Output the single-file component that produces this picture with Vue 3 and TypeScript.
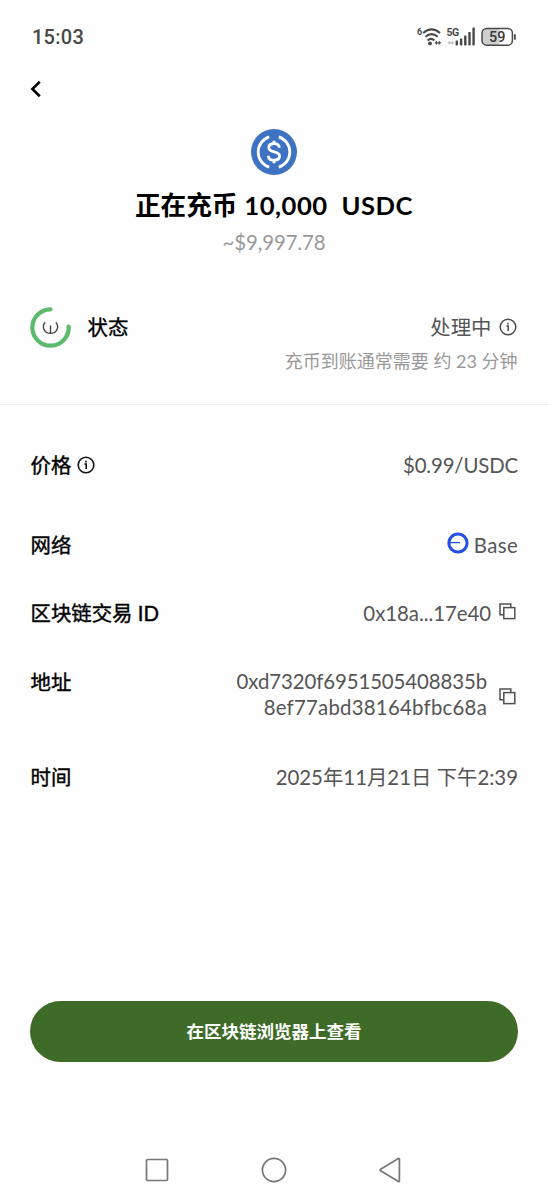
<script setup lang="ts">
const copyBack = 'M4.6 11.8H1V1H11.8V4.4'
const token = { name: 'USDC', amount: '10,000', value: '~$9,997.78', price: '$0.99/USDC' }
const addressLines: string[] = ['0xd7320f6951505408835b', '8ef77abd38164bfbc68a']
const bars = [
  { x: 11, h: 5 },
  { x: 15.3, h: 7 },
  { x: 19.5, h: 10 },
  { x: 23.7, h: 13.5 },
  { x: 27.8, h: 18 },
]
</script>

<template>
  <main class="page">
    <header class="statusbar">
      <span class="clock">15:03</span>
      <div class="indicators">
        <svg class="wifi" width="26" height="22" viewBox="0 0 26 22">
          <text x="0" y="8.6" class="tiny">6</text>
          <g fill="none" stroke="#484848" stroke-width="2.1">
            <path d="M6.2 7Q14.6 -0.4 23 7" />
            <path d="M8.5 10.8Q14.6 5.4 20.7 10.8" />
            <path d="M10.6 14.4Q14 11.2 17.4 14.4" />
          </g>
          <circle cx="13" cy="17.4" r="1.9" fill="#484848" />
          <path d="M17.6 16.8l2.4-2.1v1.5h1.8v-1.5l2.4 2.1-2.4 2.1v-1.5H20v1.5z" fill="#484848" />
        </svg>
        <svg class="cell" width="31" height="22" viewBox="0 0 31 22">
          <text x="0.4" y="10" class="tiny g5">5G</text>
          <path d="M1.4 16.8l2.6-2.2v1.5h1.8v-1.5l2.6 2.2-2.6 2.2v-1.5H4v1.5z" fill="#c4c4c4" />
          <rect v-for="b in bars" :key="b.x" :x="b.x - 1.4" :y="19.4 - b.h" width="2.4" :height="b.h" rx=".7" fill="#484848" />
        </svg>
        <svg class="battery" width="36" height="20" viewBox="0 0 36 20">
          <rect x="1" y="1.4" width="30.4" height="16.8" rx="4.8" fill="#fff" />
          <path d="M18.5 1.4H5.8A4.8 4.8 0 0 0 1 6.2v7.2a4.8 4.8 0 0 0 4.8 4.8h12.7z" fill="#cfcfcf" />
          <rect x="1" y="1.4" width="30.4" height="16.8" rx="4.8" fill="none" stroke="#484848" stroke-width="1.5" />
          <rect x="33" y="7" width="1.8" height="5.8" rx=".9" fill="#484848" />
          <text x="16.2" y="14.8" text-anchor="middle" class="level">59</text>
        </svg>
      </div>
    </header>

    <nav class="back">
      <svg width="12" height="18" viewBox="0 0 12 18">
        <path d="M9.8 1.8L2.4 9l7.4 7.2" fill="none" stroke="#000" stroke-width="2.6" />
      </svg>
    </nav>

    <section class="hero">
      <svg width="46" height="46" viewBox="0 0 46 46">
        <circle cx="23" cy="23" r="23" fill="#3e73c4" />
        <g fill="none" stroke="#fff" stroke-width="2.8">
          <path d="M18.2 7.8A16 16 0 0 0 18.2 38.2" />
          <path d="M27.8 7.8A16 16 0 0 1 27.8 38.2" />
          <path d="M28.3 18.8C28.3 16 26 14.7 23 14.7c-3.2 0-5.2 1.6-5.2 4 0 5.8 10.8 2.4 10.8 8.3 0 2.7-2.3 4.2-5.6 4.2-3.4 0-5.7-1.5-5.7-4.5M23 11.8v3M23 31v3.3" />
        </g>
      </svg>
      <h1 class="title"><span>正在充币</span><span class="amount">{{ token.amount }}</span><span class="symbol">{{ token.name }}</span></h1>
      <p class="fiat">{{ token.value }}</p>
    </section>

    <section class="progress">
      <svg width="41" height="41" viewBox="0 0 41 41">
        <path d="M20.5 2.3A18.2 18.2 0 1 0 38.7 19.6" fill="none" stroke="#5dba6d" stroke-width="4.2" stroke-linecap="round" />
        <path d="M15.2 15.2C11.4 19.6 14 26.4 20.5 26.4S29.6 19.6 25.8 15.2M20.5 18.4v8" fill="none" stroke="#484848" stroke-width="1.4" />
      </svg>
      <span class="label state">状态</span>
      <div class="progress-info">
        <div class="value with-icon">
          <span>处理中</span>
          <svg width="18" height="18" viewBox="0 0 18 18" fill="none" stroke="#4c4c4c" stroke-width="1.5">
            <circle cx="9" cy="9" r="7.8" />
            <path d="M7.4 8h1.8v5M9 4.7v1.7" />
          </svg>
        </div>
        <div class="eta">充币到账通常需要 约 <span class="minutes">23</span> 分钟</div>
      </div>
    </section>

    <section class="details">
      <div class="row price">
        <span class="label with-icon">
          <span>价格</span>
          <svg width="18" height="18" viewBox="0 0 18 18" fill="none" stroke="#111" stroke-width="1.6">
            <circle cx="9" cy="9" r="7.8" />
            <path d="M7.4 8h1.8v5M9 4.7v1.7" />
          </svg>
        </span>
        <span class="value rate">{{ token.price }}</span>
      </div>
      <div class="row network">
        <span class="label">网络</span>
        <span class="value chain">
          <svg class="chain-logo" width="22" height="22" viewBox="0 0 22 22" fill="none" stroke="#2450e6">
            <circle cx="11" cy="11" r="9.1" stroke-width="3" />
            <path d="M3 10.6h10" stroke-width="1.3" />
          </svg>
          <span class="chain-name">Base</span>
        </span>
      </div>
      <div class="row hash">
        <span class="label">区块链交易 <span class="id">ID</span></span>
        <span class="value copyable">
          <span class="hash-text">0x18a...17e40</span>
          <svg width="17" height="17" viewBox="0 0 17 17" fill="none" stroke="#505050" stroke-width="1.5">
            <path :d="copyBack" />
            <rect x="4.8" y="4.6" width="11" height="11" />
          </svg>
        </span>
      </div>
      <div class="row address">
        <span class="label">地址</span>
        <span class="value copyable">
          <span class="address-text">
            <span v-for="(line, i) in addressLines" :key="line" :class="'line' + i">{{ line }}</span>
          </span>
          <svg width="17" height="17" viewBox="0 0 17 17" fill="none" stroke="#505050" stroke-width="1.5">
            <path :d="copyBack" />
            <rect x="4.8" y="4.6" width="11" height="11" />
          </svg>
        </span>
      </div>
      <div class="row time">
        <span class="label">时间</span>
        <span class="value date">2025年11月21日 下午2:39</span>
      </div>
    </section>

    <button class="explorer" type="button">在区块链浏览器上查看</button>

    <footer class="system-nav">
      <svg width="24" height="26" viewBox="0 0 24 26"><rect x="1.5" y="2.5" width="21" height="21" rx="1.2" /></svg>
      <svg width="26" height="26" viewBox="0 0 26 26"><circle cx="13" cy="13" r="11.6" /></svg>
      <svg width="24" height="26" viewBox="0 0 24 26"><path d="M21.4 2.2v21.6q0 1.2-1 .6L2.6 13.8q-1.2-.8 0-1.6L20.4 1.6q1-.6 1 .6z" /></svg>
    </footer>
  </main>
</template>

<style>
body {
  background: #fefefe;
}
</style>

<style scoped>
.page {
  display: flex;
  flex-direction: column;
  box-sizing: border-box;
  width: 548px;
  height: 1200px;
  overflow: hidden;
  background: #fefefe;
  color: #000;
  font-family: Lato, "Noto Sans CJK SC", sans-serif;
  font-size: 20.4px;
}
svg {
  display: block;
  flex: none;
}
.statusbar {
  display: flex;
  align-items: center;
  justify-content: space-between;
  height: 74px;
  padding: 0 30px 0 32px;
}
.clock {
  color: #484848;
  font: 500 20px/24px Roboto, sans-serif;
  letter-spacing: 0.25px;
}
.indicators {
  display: flex;
  align-items: center;
  margin-right: 1px;
}
.tiny {
  font: 700 9px Roboto, sans-serif;
  fill: #484848;
}
.g5 {
  font-size: 10.5px;
  letter-spacing: -0.4px;
}
.cell {
  margin-left: 3px;
}
.battery {
  margin-left: 4px;
}
.level {
  font: 500 14.4px Roboto, sans-serif;
  fill: #383838;
}
.back {
  height: 30px;
  padding-left: 30px;
  display: flex;
  align-items: center;
}
.hero {
  display: flex;
  flex-direction: column;
  align-items: center;
  padding-top: 25px;
}
.title {
  display: flex;
  margin: 12px 0 0;
  font-size: 25.6px;
  font-weight: 700;
  line-height: 36px;
}
.amount {
  margin-left: 7px;
  letter-spacing: 0.5px;
}
.symbol {
  margin-left: 14px;
  letter-spacing: 0.5px;
}
.fiat {
  margin: 4px 0 0;
  line-height: 30px;
  letter-spacing: -0.1px;
  color: #999;
}
.progress {
  display: flex;
  height: 97px;
  margin-top: 50px;
  padding: 0 30px;
  border-bottom: 1px solid #eee;
}
.label {
  padding-left: 0.5px;
  -webkit-text-stroke: 0.4px #000;
  line-height: 30px;
}
.value {
  color: #555;
  line-height: 30px;
}
.state {
  margin: 5px 0 0 16px;
}
.progress-info {
  display: flex;
  flex-direction: column;
  align-items: flex-end;
  margin-left: auto;
  padding-top: 5px;
}
.with-icon {
  display: flex;
  align-items: center;
  gap: 6px;
}
.progress-info .with-icon {
  gap: 7px;
  margin-right: 1.5px;
}
.eta {
  margin: 4px 0.5px 0 0;
  color: #999;
  font-size: 18px;
  line-height: 30px;
  white-space: nowrap;
}
.row {
  display: flex;
  justify-content: space-between;
  padding: 0 30px;
}
.price {
  margin-top: 45px;
}
.rate {
  letter-spacing: -0.15px;
}
.network {
  margin-top: 50px;
}
.hash {
  margin-top: 38px;
}
.address {
  margin-top: 40px;
}
.address .label {
  margin-top: -1px;
}
.time {
  margin-top: 42px;
}
.chain {
  display: flex;
  align-items: center;
  gap: 5px;
}
.chain-logo {
  margin-top: -4px;
}
.chain-name {
  letter-spacing: 0.35px;
}
.copyable {
  display: flex;
  align-items: center;
  gap: 8px;
  padding-right: 2px;
}
.hash-text {
  letter-spacing: -0.05px;
}
.hash .copyable svg {
  margin-top: -4px;
}
.address-text {
  display: flex;
  flex-direction: column;
  align-items: flex-end;
  margin-right: 4px;
  line-height: 26px;
}
.address .copyable svg {
  margin-top: 5px;
}
.line0 {
  letter-spacing: -0.1px;
}
.line1 {
  letter-spacing: 0.23px;
}
.explorer {
  height: 61px;
  margin: 209px 30px 0;
  border: 0;
  border-radius: 31px;
  background: #3e6c28;
  color: #fff;
  font: 700 17.5px/60px Lato, "Noto Sans CJK SC", sans-serif;
}
.system-nav {
  display: flex;
  justify-content: space-between;
  margin: 95px 146px 0 145px;
}
.system-nav svg {
  fill: none;
  stroke: #777;
  stroke-width: 1.7;
}
</style>
